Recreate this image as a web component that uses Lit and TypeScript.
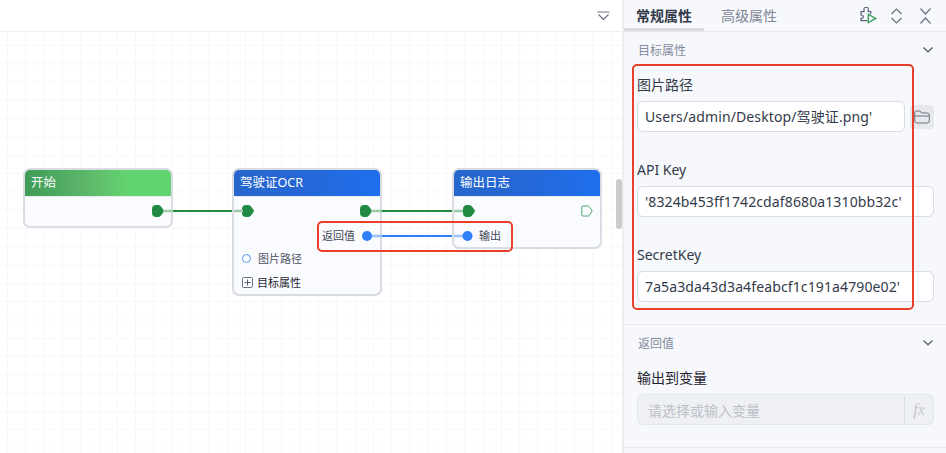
import { LitElement, css, html, svg } from 'lit';
import { customElement } from 'lit/decorators.js';

const port = (filled: boolean) => html`
  <svg class="port" width="12" height="12" viewBox="0 0 12 12">
    <path
      d=${filled
        ? 'M3.5 0.5 H6.5 Q7.8 0.5 8.6 1.6 L11.1 5 Q11.8 6 11.1 7 L8.6 10.4 Q7.8 11.5 6.5 11.5 H3.5 Q0.5 11.5 0.5 8.5 V3.5 Q0.5 0.5 3.5 0.5 Z'
        : 'M2 1 H7 Q7.6 1 8 1.5 L10.8 5.2 Q11.4 6 10.8 6.8 L8 10.5 Q7.6 11 7 11 H2 Q0.8 11 0.8 9.8 V2.2 Q0.8 1 2 1 Z'}
      fill=${filled ? '#218a42' : '#fafcff'}
      stroke=${filled ? '#218a42' : '#4ea46b'}
      stroke-width="1"
    ></path>
  </svg>
`;

const chevron = html`
  <svg width="12" height="8" viewBox="0 0 12 8">
    <path d="M1.5 1.5 L6 5.8 L10.5 1.5" fill="none" stroke="#5c6478" stroke-width="1.5"></path>
  </svg>
`;

@customElement('app-root')
export class AppRoot extends LitElement {
  static styles = css`
    :host {
      display: flex;
      width: 946px;
      height: 453px;
      overflow: hidden;
      background: #fff;
      font-family: 'Noto Sans', 'Noto Sans CJK SC', sans-serif;
      color: #333a4a;
    }

    /* left side */
    .main {
      width: 622px;
      display: flex;
      flex-direction: column;
      flex: none;
    }
    .toolbar {
      height: 31px;
      flex: none;
      display: flex;
      align-items: center;
      justify-content: flex-end;
      padding: 0 12px 0 0;
      border-bottom: 1px solid #eceef2;
      box-sizing: content-box;
    }
    .canvas {
      position: relative;
      flex: 1;
      background-color: #fff;
      background-image: linear-gradient(#f7f7f9 1px, transparent 1px),
        linear-gradient(90deg, #f7f7f9 1px, transparent 1px);
      background-size: 18.3px 18.3px;
      background-position: 7px 13px;
    }
    .edges {
      position: absolute;
      left: 0;
      top: 0;
    }
    .node {
      position: absolute;
      width: 150px;
      box-sizing: border-box;
      border: 2px solid #dadce4;
      border-radius: 7px;
      background: #f9fbff;
    }
    .node-head {
      height: 26px;
      padding-left: 6px;
      border-radius: 5px 5px 0 0;
      border-bottom: 1px solid #e4e9f2;
      box-sizing: content-box;
      margin-bottom: -1px;
      color: #fff;
      font-size: 12.5px;
      line-height: 26px;
      background: linear-gradient(90deg, #2767cc 0%, #2567d6 45%, #1f6fee 100%);
    }
    .node-head.green {
      background: linear-gradient(90deg, #3f9c56 0%, #5fb96c 45%, #62d46f 70%, #62d46f 100%);
    }
    .start { left: 23px; top: 136px; height: 60px; }
    .ocr { left: 232px; top: 136px; height: 128px; }
    .log { left: 452px; top: 136px; height: 81px; }
    .row {
      display: flex;
      align-items: center;
      justify-content: space-between;
      height: 30px;
      padding: 0 8px;
    }
    .start .row { justify-content: flex-end; padding-right: 7px; }
    .log .row { padding-left: 9px; padding-right: 7px; }
    .port { display: block; }
    .prop {
      display: flex;
      align-items: center;
      height: 24px;
      font-size: 11px;
      padding-left: 8px;
      color: #4a5163;
    }
    .prop.first { margin-top: 20px; }
    .ring {
      width: 7px;
      height: 7px;
      border: 1.5px solid #5b97f5;
      border-radius: 50%;
      margin-right: 7px;
    }
    .plus {
      width: 11px;
      height: 11px;
      margin-right: 4px;
    }
    .prop.dark { color: #1f2430; }

    .out-label {
      position: absolute;
      font-size: 11px;
      line-height: 16px;
      color: #3e4555;
    }
    .mark {
      position: absolute;
      border: 2px solid #e8402a;
      border-radius: 5px;
      box-sizing: border-box;
      pointer-events: none;
    }
    .mark.returns { left: 317px; top: 189px; width: 196px; height: 31px; }
    .mark.fields-mark { left: 8px; top: 64px; width: 282px; height: 246px; }
    .label-return { left: 322px; top: 196px; }
    .label-out { left: 479px; top: 196px; }
    .scroll-thumb {
      position: absolute;
      left: 616px;
      top: 147px;
      width: 6px;
      height: 50px;
      border-radius: 3px;
      background: #cbcbcb;
    }

    /* right panel */
    .panel {
      flex: 1;
      position: relative;
      box-sizing: border-box;
      border-left: 2px solid #eceef2;
      background: #f6f8fb;
      display: flex;
      flex-direction: column;
    }
    .tabs {
      height: 31px;
      flex: none;
      display: flex;
      align-items: center;
      border-bottom: 1px solid #e6e8ee;
      font-size: 14px;
      box-sizing: content-box;
    }
    .tab {
      height: 31px;
      box-sizing: border-box;
      line-height: 31px;
      color: #7d8595;
    }
    .tab.active {
      width: 80px;
      padding-left: 12px;
      font-weight: 700;
      color: #333a4a;
      border-bottom: 3px solid #dcdcdc;
    }
    .tab.second { margin-left: 17px; }
    .tools {
      margin-left: auto;
      display: flex;
      align-items: center;
      gap: 16px;
      padding-right: 14px;
    }
    .puzzle { margin-right: -5px; }
    .sec-head {
      display: flex;
      align-items: center;
      justify-content: space-between;
      padding: 0 12px 0 14px;
      font-size: 12px;
      color: #848b9c;
      height: 18px;
    }
    .section { padding: 9px 0 0; }
    .fields { padding: 0 12px 0 13px; margin-top: 16px; }
    .label {
      font-size: 14px;
      line-height: 20px;
      color: #333a4a;
      margin-bottom: 6px;
    }
    .label.dark { color: #1f2430; }
    .field { margin-bottom: 28px; }
    .field:last-child { margin-bottom: 0; }
    .input {
      height: 31px;
      box-sizing: border-box;
      border: 1px solid #d8dce6;
      border-radius: 6px;
      background: #fff;
      padding-left: 7px;
      font-size: 14px;
      line-height: 29px;
      letter-spacing: 0.12px;
      white-space: nowrap;
      overflow: hidden;
      color: #333a4a;
    }
    .with-btn {
      display: flex;
      align-items: center;
      gap: 5px;
    }
    .with-btn .input { width: 268px; flex: none; }
    .folder {
      width: 24px;
      height: 24px;
      flex: none;
      border-radius: 4px;
      background: #e7e8eb;
      display: flex;
      align-items: center;
      justify-content: center;
    }
    .divider {
      height: 1px;
      margin-top: 22px;
      background: #e6e8ee;
    }
    .disabled {
      display: flex;
      height: 31px;
      box-sizing: border-box;
      border: 1px solid #e2e6f0;
      border-radius: 6px;
      background: #eff0f3;
      font-size: 14px;
      color: #bcc0c8;
      align-items: center;
    }
    .disabled .ph { flex: 1; padding-left: 10px; }
    .disabled .fx {
      width: 28px;
      height: 27px;
      border-left: 1px solid #d8dce6;
      text-align: center;
      font-family: 'Liberation Serif', serif;
      font-style: italic;
      font-size: 16px;
      line-height: 27px;
      color: #c4c7ce;
    }
  `;

  render() {
    return html`
      <div class="main">
        <div class="toolbar">
          <svg width="13" height="10" viewBox="0 0 13 10">
            <path d="M0.5 1 H12.5" stroke="#6b7283" stroke-width="1"></path>
            <path d="M1.5 3.5 L6.5 8.5 L11.5 3.5" fill="none" stroke="#6b7283" stroke-width="1.2"></path>
          </svg>
        </div>
        <div class="canvas">
          <div class="node start">
            <div class="node-head green">开始</div>
            <div class="row">${port(true)}</div>
          </div>
          <div class="node ocr">
            <div class="node-head">驾驶证OCR</div>
            <div class="row">${port(true)}${port(true)}</div>
            <div class="prop first"><span class="ring"></span>图片路径</div>
            <div class="prop dark">
              <svg class="plus" viewBox="0 0 11 11">
                <rect x="0.5" y="0.5" width="10" height="10" rx="1" fill="none" stroke="#6b7283"></rect>
                <path d="M2.5 5.5 H8.5 M5.5 2.5 V8.5" stroke="#555c6c"></path>
              </svg>目标属性
            </div>
          </div>
          <div class="node log">
            <div class="node-head">输出日志</div>
            <div class="row">${port(true)}${port(false)}</div>
          </div>

          <svg class="edges" width="622" height="420">
            ${svg`
              <path d="M163 179 H173" stroke="#9cc8aa" stroke-width="2.5"></path>
              <path d="M173 179 H232" stroke="#218a42" stroke-width="2"></path>
              <path d="M234 179 H243" stroke="#9cc8aa" stroke-width="2.5"></path>
              <path d="M371 179 H382" stroke="#9cc8aa" stroke-width="2.5"></path>
              <path d="M382 179 H452" stroke="#218a42" stroke-width="2"></path>
              <path d="M454 179 H463" stroke="#9cc8aa" stroke-width="2.5"></path>
              <path d="M372 204 H382" stroke="#9ac1fb" stroke-width="2.5"></path>
              <path d="M382 204 H452" stroke="#2f7ff7" stroke-width="2"></path>
              <path d="M454 204 H463" stroke="#9ac1fb" stroke-width="2.5"></path>
              <circle cx="367" cy="204" r="5" fill="#2f7ff7"></circle>
              <circle cx="467.5" cy="204" r="5" fill="#2f7ff7"></circle>
            `}
          </svg>
          <span class="out-label label-return">返回值</span>
          <span class="out-label label-out">输出</span>
          <div class="mark returns"></div>
          <div class="scroll-thumb"></div>
        </div>
      </div>
      <div class="panel">
        <div class="tabs">
          <div class="tab active">常规属性</div>
          <div class="tab second">高级属性</div>
          <div class="tools">
            <svg class="puzzle" width="20" height="20" viewBox="0 0 20 20">
              <path
                d="M11.7 8.3 V5.7 H9.3 V2.8 Q9.3 1.5 8 1.5 H6.3 Q5 1.5 5 2.8 V5.7 H2 V9 Q4.3 9.2 4.3 10.7 Q4.3 12.2 2 12.3 V14.7 H8.3"
                fill="none"
                stroke="#5c6478"
                stroke-width="1.2"
              ></path>
              <path d="M9.3 8.3 L16.7 12.4 L9.3 16.7 Z" fill="none" stroke="#2a9a4c" stroke-width="1.3"></path>
            </svg>
            <svg width="13" height="18" viewBox="0 0 13 18">
              <path d="M1.5 7 L6.5 2 L11.5 7 M1.5 11 L6.5 16 L11.5 11" fill="none" stroke="#6b7283" stroke-width="1.2"></path>
            </svg>
            <svg width="13" height="18" viewBox="0 0 13 18">
              <path d="M1.5 1.5 L6.5 7 L11.5 1.5 M1.5 16.5 L6.5 11 L11.5 16.5" fill="none" stroke="#6b7283" stroke-width="1.2"></path>
            </svg>
          </div>
        </div>
        <div class="section">
          <div class="sec-head"><span>目标属性</span>${chevron}</div>
          <div class="fields">
            <div class="field">
              <div class="label">图片路径</div>
              <div class="with-btn">
                <div class="input">Users/admin/Desktop/驾驶证.png'</div>
                <div class="folder">
                  <svg width="16" height="14" viewBox="0 0 16 14">
                    <path
                      d="M0.7 3 Q0.7 1 2.5 1 H6 L7.5 3 H13.5 Q15.3 3 15.3 5 V11 Q15.3 13 13.5 13 H2.5 Q0.7 13 0.7 11 Z M0.7 6 H15.3"
                      fill="none"
                      stroke="#6b7283"
                      stroke-width="1"
                    ></path>
                  </svg>
                </div>
              </div>
            </div>
            <div class="field">
              <div class="label">API Key</div>
              <div class="input">'8324b453ff1742cdaf8680a1310bb32c'</div>
            </div>
            <div class="field">
              <div class="label">SecretKey</div>
              <div class="input">7a5a3da43d3a4feabcf1c191a4790e02'</div>
            </div>
          </div>
        </div>
        <div class="divider"></div>
        <div class="section">
          <div class="sec-head"><span>返回值</span>${chevron}</div>
          <div class="fields">
            <div class="label dark">输出到变量</div>
            <div class="disabled">
              <span class="ph">请选择或输入变量</span>
              <span class="fx">fx</span>
            </div>
          </div>
        </div>
        <div class="divider"></div>
        <div class="mark fields-mark"></div>
      </div>
    `;
  }
}
